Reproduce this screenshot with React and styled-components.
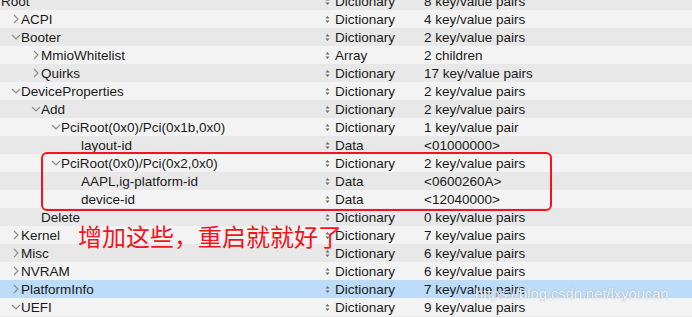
import styled, { createGlobalStyle } from "styled-components";

const rows = [
  { name: "Root", level: 0, arrow: null, type: "Dictionary", value: "8 key/value pairs" },
  { name: "ACPI", level: 1, arrow: "right", type: "Dictionary", value: "4 key/value pairs" },
  { name: "Booter", level: 1, arrow: "down", type: "Dictionary", value: "2 key/value pairs" },
  { name: "MmioWhitelist", level: 2, arrow: "right", type: "Array", value: "2 children" },
  { name: "Quirks", level: 2, arrow: "right", type: "Dictionary", value: "17 key/value pairs" },
  { name: "DeviceProperties", level: 1, arrow: "down", type: "Dictionary", value: "2 key/value pairs" },
  { name: "Add", level: 2, arrow: "down", type: "Dictionary", value: "2 key/value pairs" },
  { name: "PciRoot(0x0)/Pci(0x1b,0x0)", level: 3, arrow: "down", type: "Dictionary", value: "1 key/value pair" },
  { name: "layout-id", level: 4, arrow: null, type: "Data", value: "<01000000>" },
  { name: "PciRoot(0x0)/Pci(0x2,0x0)", level: 3, arrow: "down", type: "Dictionary", value: "2 key/value pairs" },
  { name: "AAPL,ig-platform-id", level: 4, arrow: null, type: "Data", value: "<0600260A>" },
  { name: "device-id", level: 4, arrow: null, type: "Data", value: "<12040000>" },
  { name: "Delete", level: 2, arrow: null, type: "Dictionary", value: "0 key/value pairs" },
  { name: "Kernel", level: 1, arrow: "right", type: "Dictionary", value: "7 key/value pairs" },
  { name: "Misc", level: 1, arrow: "right", type: "Dictionary", value: "6 key/value pairs" },
  { name: "NVRAM", level: 1, arrow: "right", type: "Dictionary", value: "6 key/value pairs" },
  { name: "PlatformInfo", level: 1, arrow: "right", type: "Dictionary", value: "7 key/value pairs", selected: true },
  { name: "UEFI", level: 1, arrow: "down", type: "Dictionary", value: "9 key/value pairs" },
  { name: "", level: 0, arrow: null, type: "", value: "" },
];

const Global = createGlobalStyle`
  html, body { margin: 0; padding: 0; background: #f3f3f3; }
  body { font-family: "Liberation Sans", Arial, sans-serif; }
`;

const Frame = styled.div`
  position: relative;
  width: 692px;
  height: 317px;
  overflow: hidden;
`;

const List = styled.div`
  margin-top: -8px;
  display: flex;
  flex-direction: column;
`;

const Row = styled.div`
  display: grid;
  grid-template-columns: 325px 99px 1fr;
  height: 18px;
  align-items: center;
  font-size: 13.5px;
  color: #1a1a1a;
  background: ${({ $selected, $dark }) =>
    $selected ? "#bddcf9" : $dark ? "#e8e8e8" : "#f3f3f3"};
`;

const NameCell = styled.div`
  display: flex;
  align-items: center;
  margin-left: ${({ $level }) => $level * 20 - 9}px;
  white-space: nowrap;
`;

const ArrowBox = styled.span`
  width: 10px;
  display: inline-flex;
  align-items: center;
  justify-content: center;
  flex-shrink: 0;
`;

const TypeCell = styled.div`
  display: flex;
  align-items: center;
  gap: 5px;
`;

const Value = styled.div`
  white-space: nowrap;
`;

const Highlight = styled.div`
  position: absolute;
  left: 41px;
  top: 152px;
  width: 507px;
  height: 55px;
  border: 2.5px solid #f5121c;
  border-radius: 6px;
  pointer-events: none;
`;

const Note = styled.div`
  position: absolute;
  left: 78px;
  top: 221px;
  font-family: "Noto Sans CJK SC", sans-serif;
  font-size: 24px;
  line-height: 30px;
  color: #f5121c;
  white-space: nowrap;
`;

const Watermark = styled.div`
  position: absolute;
  left: 475px;
  top: 286px;
  font-family: "Liberation Sans", Arial, sans-serif;
  font-size: 14.7px;
  color: rgba(255, 255, 255, 0.9);
  text-shadow: 0 0 1px rgba(110, 110, 110, 0.7);
  white-space: nowrap;
`;

const Arrow = ({ dir }) => {
  if (!dir) return <ArrowBox />;
  return (
    <ArrowBox>
      {dir === "right" ? (
        <svg width="6" height="10" viewBox="0 0 6 10">
          <path d="M1 1 L5 5 L1 9" fill="none" stroke="#8a8a8a" strokeWidth="1.1" />
        </svg>
      ) : (
        <svg width="10" height="6" viewBox="0 0 10 6">
          <path d="M1 1 L5 5 L9 1" fill="none" stroke="#8a8a8a" strokeWidth="1.1" />
        </svg>
      )}
    </ArrowBox>
  );
};

const Stepper = () => (
  <svg width="5" height="9" viewBox="0 0 5 9">
    <path d="M0.5 3.5 L2.5 1 L4.5 3.5 Z M0.5 5.5 L2.5 8 L4.5 5.5 Z" fill="#6a6a6a" />
  </svg>
);

export default function App() {
  return (
    <Frame>
      <Global />
      <List>
        {rows.map((r, i) => (
          <Row key={i} $dark={i % 2 === 0} $selected={r.selected}>
            <NameCell $level={r.level}>
              <Arrow dir={r.arrow} />
              {r.name}
            </NameCell>
            <TypeCell>
              {r.type && <Stepper />}
              {r.type}
            </TypeCell>
            <Value>{r.value}</Value>
          </Row>
        ))}
      </List>
      <Highlight />
      <Note>增加这些，重启就就好了</Note>
      <Watermark>https://blog.csdn.net/lxyoucan</Watermark>
    </Frame>
  );
}
